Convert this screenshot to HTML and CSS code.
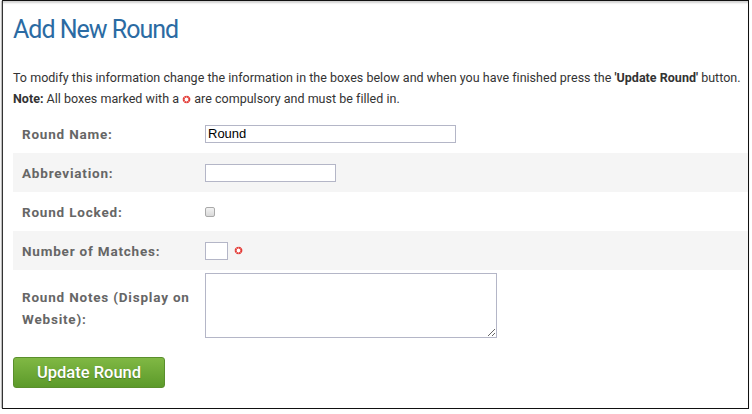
FILE: index.html
```html
<!DOCTYPE html>
<html>
<head>
<meta charset="utf-8">
<link rel="stylesheet" href="styles.css">
</head>
<body>
<div class="frame">
  <h1 class="title">Add New Round</h1>
  <p class="intro">To modify this information change the information in the boxes below and when you have finished press the <b>'Update Round'</b> button.<br><b>Note:</b> All boxes marked with a <svg class="req req-inline" viewBox="0 0 10 10" width="9" height="9"><circle cx="5" cy="5" r="3.2" fill="#fff" stroke="#e33b36" stroke-width="2.2" stroke-dasharray="2.2 0.3"/></svg> are compulsory and must be filled in.</p>
  <form class="form">
    <div class="row">
      <label class="lbl">Round Name:</label>
      <div class="field"><input class="inp inp-name" type="text" value="Round"></div>
    </div>
    <div class="row alt">
      <label class="lbl">Abbreviation:</label>
      <div class="field"><input class="inp inp-abbr" type="text"></div>
    </div>
    <div class="row">
      <label class="lbl">Round Locked:</label>
      <div class="field"><span class="chk"></span></div>
    </div>
    <div class="row alt">
      <label class="lbl">Number of Matches:</label>
      <div class="field"><input class="inp inp-num" type="text"><svg class="req" viewBox="0 0 10 10" width="9" height="9"><circle cx="5" cy="5" r="3.2" fill="#fff" stroke="#e33b36" stroke-width="2.2" stroke-dasharray="2.2 0.3"/></svg></div>
    </div>
    <div class="row notes">
      <label class="lbl lbl-notes">Round Notes (Display on Website):</label>
      <div class="field"><textarea class="ta"></textarea></div>
    </div>
    <div class="actions"><button type="button" class="btn">Update Round</button></div>
  </form>
</div>
</body>
</html>
```
FILE: styles.css
```css
html, body { margin: 0; padding: 0; background: #fff; }
body { font-family: Roboto, "Liberation Sans", sans-serif; }
.frame {
  box-sizing: border-box;
  width: 747px;
  height: 409px;
  margin-left: 2px;
  border: 1px solid #111;
  border-left-color: #333;
  padding-left: 10px;
  box-shadow: 0 3px 2px -1px rgba(0,0,0,0.28), -2px 0 1px -1px rgba(0,0,0,0.25), inset 0 3px 2px -1px rgba(0,0,0,0.18);
  overflow: hidden;
}
.title {
  margin: 13px 0 0 0;
  font-size: 25px;
  line-height: 32px;
  font-weight: 400;
  color: #2b6ba3;
  letter-spacing: -1px;
}
.intro {
  margin: 21px 0 0 0;
  font-size: 12.5px;
  line-height: 21px;
  color: #333;
  letter-spacing: 0.02px;
}
.intro b { font-weight: 700; }
.req { display: inline-block; vertical-align: middle; }
.req-inline { vertical-align: -1px; }
.form { margin-top: 5px; }
.row {
  display: grid;
  grid-template-columns: 183px 1fr;
  align-items: center;
  min-height: 39px;
  padding-left: 9px;
}
.row.alt { background: #f5f5f5; min-height: 39px; }
.lbl {
  font-size: 13.5px;
  font-weight: 700;
  color: #666;
  letter-spacing: 0.8px;
}
.field { display: flex; align-items: center; gap: 6px; }
.inp {
  box-sizing: border-box;
  height: 18px;
  border: 1px solid #b4b6c7;
  padding: 0 2px;
  font-family: "Liberation Sans", Arial, sans-serif;
  font-size: 13px;
  color: #000;
  background: #fff;
  outline: none;
  margin: 0;
}
.inp-name { width: 251px; }
.inp-abbr { width: 131px; }
.inp-num { width: 23px; }
.chk {
  display: inline-block;
  box-sizing: border-box;
  width: 10px;
  height: 10px;
  border: 1px solid #a9a9a9;
  border-radius: 2px;
  background: linear-gradient(#f2f2f2, #d9d9d9);
}
.row.notes { align-items: start; padding-top: 3px; padding-bottom: 8px; }
.lbl-notes { line-height: 22px; padding-top: 13px; padding-right: 10px; }
.ta {
  box-sizing: border-box;
  width: 292px;
  height: 65px;
  border: 1px solid #b4b6c7;
  margin: 0;
  display: block;
  outline: none;
}
.actions { margin-top: 11px; }
.btn {
  box-sizing: border-box;
  width: 152px;
  height: 31px;
  border: 1px solid #5a8f2c;
  border-radius: 3px;
  background: linear-gradient(#80b844, #5c9a2a);
  color: #fff;
  font-family: Roboto, "Liberation Sans", sans-serif;
  font-size: 16.5px;
  font-weight: 500;
  letter-spacing: 0;
  text-shadow: 0 1px 1px rgba(0,0,0,0.25);
  padding: 0;
}
```
